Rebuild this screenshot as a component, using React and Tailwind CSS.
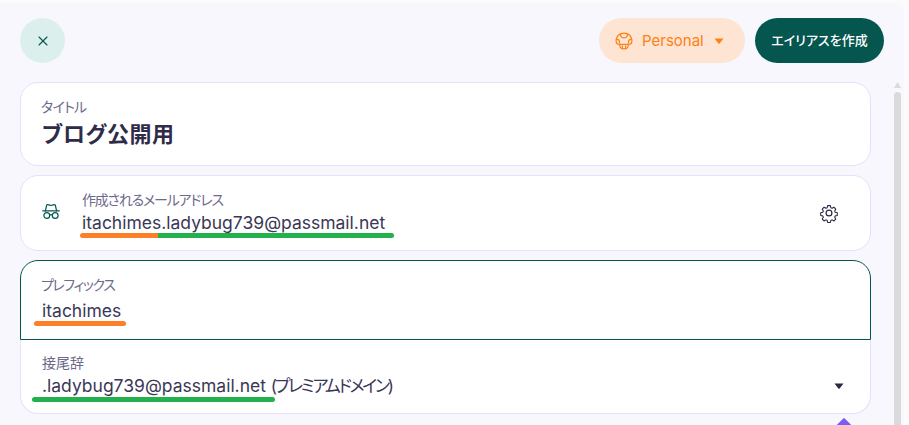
import React from 'react';
import { X } from 'lucide-react';

const MushroomIcon = () => (
    <svg width="18" height="18" viewBox="0 0 20 20" fill="none" stroke="#ff8014" strokeWidth="1.4" strokeLinejoin="round" strokeLinecap="round">
        <path d="M10 1.200C5 1.200 1.200 5 1.200 9.400c0 2.600 1.600 4.300 3.800 4.300h10c2.200 0 3.800-1.700 3.800-4.300C18.800 5 15 1.200 10 1.200Z" />
        <path d="M6.300 2.300C6 4.800 7.400 6.600 10 6.600s4-1.800 3.700-4.300" />
        <path d="M1.500 8.300c2.300-.5 3.700 1 3.500 3.500M18.500 8.300c-2.300-.5-3.700 1-3.500 3.500" />
        <path d="M5.400 13.700c-.6 2.700.9 5.100 4.600 5.100s5.200-2.400 4.600-5.100" />
        <path d="M8.200 15.500v1.500M11.800 15.500v1.500" />
    </svg>
);

const HatGlassesIcon = () => (
    <svg width="18" height="17" viewBox="0 0 18 16" fill="none" stroke="#04564f" strokeWidth="1.2" strokeLinejoin="round" strokeLinecap="round">
        <path d="M.7 7.300h16.600" />
        <path d="M3.400 7.300 4.600 2c.1-.6.700-1 1.300-.8l1.800.5c.9.200 1.700.2 2.600 0l1.800-.5c.6-.2 1.200.2 1.300.8l1.200 5.300" />
        <circle cx="4.800" cy="12" r="2.900" />
        <circle cx="13.200" cy="12" r="2.900" />
        <path d="M7.700 11.500c.8-.5 1.800-.5 2.600 0" />
    </svg>
);

// cog with rounded teeth, the lucide one is too plain here
const CogIcon = () => (
    <svg width="20" height="20" viewBox="0 0 20 20" fill="none" stroke="#2b2845" strokeWidth="1.200" strokeLinejoin="round">
        <path d="M8.500 1.800h3l.5 2.300 1.500.7 2-1.200 2 2.100-1.200 2 .6 1.400 2.300.6v3l-2.300.5-.6 1.500 1.200 2-2 2.100-2-1.200-1.500.6-.5 2.300h-3l-.5-2.300-1.500-.6-2 1.200-2-2.100 1.200-2-.6-1.500-2.300-.5v-3l2.300-.6.600-1.400-1.200-2 2-2.100 2 1.200 1.500-.7Z" transform="translate(1 1) scale(.9)" />
        <circle cx="10" cy="10" r="2.900" />
    </svg>
);

const jp = 'font-["Inter","Noto_Sans_CJK_JP",sans-serif] [font-feature-settings:"palt"]';

export default function App() {
    return (
        <div className={`w-[909px] h-[425px] overflow-hidden bg-[#fbfbfb] pt-[3px] ${jp}`}>
            <div className="w-[904px] h-[422px] bg-[#f9f7fe] rounded-tr-lg flex">
                <div className="w-[871px] pl-5 pt-[15px] shrink-0">
                    <div className="flex items-center justify-between h-[45px] w-[864px]">
                        <button className="w-[45px] h-[45px] rounded-full bg-[#dbf0ec] flex items-center justify-center text-[#04564f]">
                            <X size={16} strokeWidth={1.6} />
                        </button>
                        <div className="flex items-center gap-[10px]">
                            <button className="w-[146px] h-[45px] rounded-full bg-[#fee4d3] flex items-center pl-4 text-[#ff8014] text-[15px]">
                                <MushroomIcon />
                                <span className="ml-[9px] mt-[2px]">Personal</span>
                                <svg className="ml-[10px]" width="10" height="6" viewBox="0 0 10 6"><path d="M0.500 0.500h9L5.800 5.200a1 1 0 0 1-1.600 0Z" fill="#ff8014" /></svg>
                            </button>
                            <button className="w-[129px] h-[45px] rounded-full bg-[#04564f] text-white text-[13px] font-medium">
                                エイリアスを作成
                            </button>
                        </div>
                    </div>

                    <div className="mt-[19px] w-[851px] h-[84px] bg-white rounded-[18px] border border-[#e5e0fb] pl-5 pt-[15px]">
                        <div className="text-[14px] leading-[18px] text-[#6e6a8c] tracking-[-0.8px]">タイトル</div>
                        <div className="text-[22px] leading-[36px] tracking-[0.5px] ml-px font-semibold text-[#2f2c4a]">ブログ公開用</div>
                    </div>

                    <div className="mt-[9px] w-[851px] h-[76px] bg-white rounded-[18px] border border-[#e5e0fb] flex items-center pl-[21px] pr-[31px]">
                        <div className="-mt-[4px]"><HatGlassesIcon /></div>
                        <div className="ml-[22px] flex-1 pt-[2px]">
                            <div className="text-[14px] leading-[18px] text-[#6e6a8c] tracking-[-1.2px]">作成されるメールアドレス</div>
                            <div className="relative w-fit text-[17.5px] leading-[28px] text-[#3a3757]">
                                itachimes.ladybug739@passmail.net
                                <span className="absolute left-[-2px] top-[24px] w-[78px] h-[5px] rounded-l-full bg-[#ff7f27]"></span>
                                <span className="absolute left-[76px] top-[24px] w-[236px] h-[5px] rounded-r-full bg-[#22b14c]"></span>
                            </div>
                        </div>
                        <div className="-mt-[1px]"><CogIcon /></div>
                    </div>

                    <div className="mt-[9px] w-[851px] h-[154px] flex flex-col">
                        <div className="h-[80px] bg-white rounded-t-[18px] border border-[#04564f] pl-5 pt-[15px]">
                            <div className="text-[14px] leading-[18px] text-[#6e6a8c] tracking-[-1.4px]">プレフィックス</div>
                            <div className="relative w-fit text-[17.5px] leading-[30px] mt-[2px] text-[#3a3757] ml-px">
                                itachimes
                                <span className="absolute left-[-8px] top-[25px] w-[92px] h-[5px] rounded-full bg-[#ff7f27]"></span>
                            </div>
                        </div>
                        <div className="relative flex-1 bg-white rounded-b-[18px] border border-t-0 border-[#e5e0fb] pl-[21px] pr-[26px] pt-[14px]">
                            <div className="text-[14px] leading-[18px] text-[#6e6a8c]">接尾辞</div>
                            <div className="flex items-center justify-between text-[17.5px] leading-[28px] text-[#3a3757]">
                                <div className="relative">
                                    .ladybug739@passmail.net <span className="text-[17px] tracking-[-2.300px]">(プレミアムドメイン)</span>
                                    <span className="absolute left-[-10px] top-[25px] w-[243px] h-[5px] rounded-full bg-[#22b14c]"></span>
                                </div>
                                <svg width="10" height="6" viewBox="0 0 10 6"><path d="M0.500 0.500h9L5.800 5.200a1 1 0 0 1-1.600 0Z" fill="#2b2845" /></svg>
                            </div>
                            <span className="absolute right-[18px] top-[81px] w-[16px] h-[16px] rotate-45 rounded-[1px] bg-[#7c5cf0]"></span>
                        </div>
                    </div>
                </div>

                <div className="ml-[23px] w-[7px] flex flex-col items-center pt-[79px]">
                    <svg width="7" height="6" viewBox="0 0 7 6"><path d="M3.500 0 7 6H0Z" fill="#dadada" /></svg>
                    <div className="mt-[4px] flex-1 w-[7px] bg-[#dadada] rounded-t-full"></div>
                </div>
            </div>
        </div>
    );
}
